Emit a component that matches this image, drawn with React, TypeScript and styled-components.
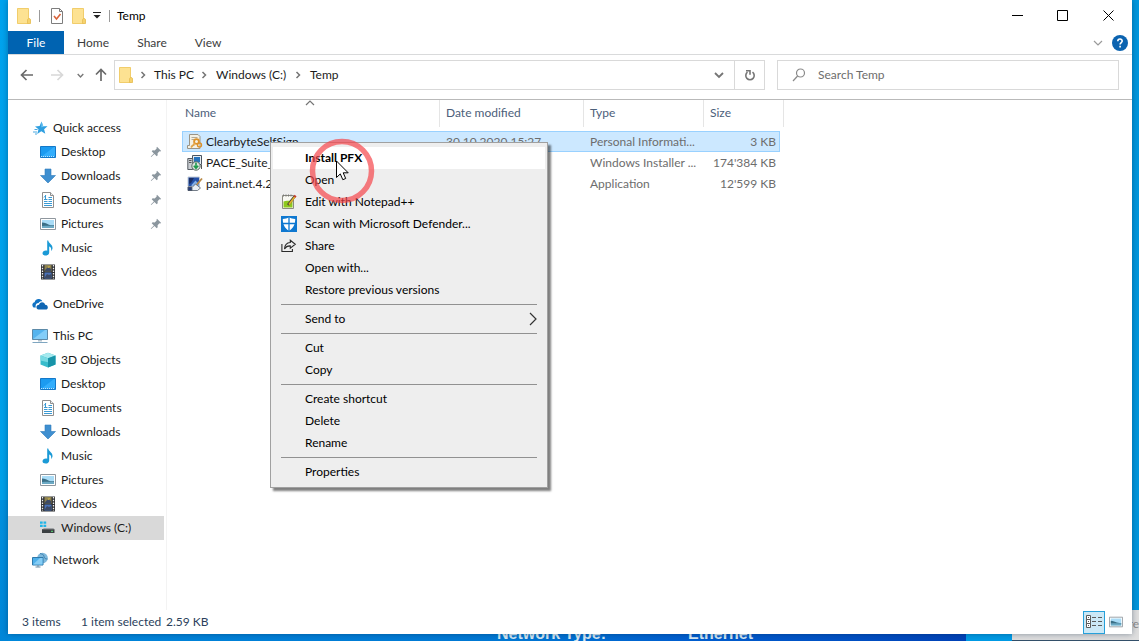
import React from "react";
import styled, { createGlobalStyle, css } from "styled-components";

const Global = createGlobalStyle`
  * { box-sizing: border-box; }
  body { margin: 0; font: 12px/16px Lato, "Open Sans", sans-serif; color: #1b1b1b; }
  button, input { font: inherit; color: inherit; background: none; border: 0; padding: 0; margin: 0; }
  a { color: inherit; text-decoration: none; }
  svg { display: block; flex: none; }
`;

const Desktop = styled.div`
  position: relative;
  display: flex;
  min-height: 100vh;
  padding: 0 7px 7px 8px;
  overflow: hidden;
  background:
    linear-gradient(#00a3ee, #00a0e8 78%, #0090de 78%, #0086d8) left / 8px 100% no-repeat,
    linear-gradient(#0097dd, #0096dc) right / 7px 100% no-repeat,
    linear-gradient(90deg, #0089dc, #0078d4 45%, #005fd0 60%, #0050c4 75%, #0043b8 84%, #0042b8 966px, #009be5 966px);
`;

const Wallpaper = styled.div`
  position: absolute;
  left: 497px;
  bottom: -3px;
  display: flex;
  gap: 82px;
  font: bold 16px/20px "Liberation Sans", sans-serif;
  color: #d8eaf4;
`;

const BackPanel = styled.div`
  position: absolute;
  right: 0;
  bottom: 0;
  width: 127px;
  height: 31px;
  padding-top: 6px;
  border-bottom: 1px solid #34506a;
  background: #dedede;
  color: #8c8c8c;
  text-align: right;
  overflow: hidden;
`;

const Window = styled.main`
  position: relative;
  flex: 1;
  min-width: 0;
  display: flex;
  flex-direction: column;
  background: #fff;
  box-shadow: 0 0 6px rgba(0, 30, 60, 0.4);
`;

const TitleBar = styled.header`
  display: flex;
  align-items: center;
  height: 31px;
  padding: 0 1px 0 9px;
  color: #000;
`;

const Rule = styled.span<{ $space: number }>`
  width: 1px;
  height: 12px;
  margin: 0 ${(p) => p.$space}px;
  background: #9a9a9a;
`;

const IconButton = styled.button<{ $w: number; $h?: number }>`
  display: flex;
  flex: none;
  align-items: center;
  justify-content: center;
  width: ${(p) => p.$w}px;
  height: ${(p) => p.$h ?? 30}px;
`;

const Title = styled.h1`
  flex: 1;
  margin: 0;
  font-size: 12px;
  font-weight: 400;
`;

const Ribbon = styled.nav`
  display: flex;
  align-items: center;
  height: 24px;
  border-bottom: 1px solid #d9dadb;
  color: #3c3c3c;
`;

const Tab = styled.button<{ $active?: boolean; $w: number }>`
  width: ${(p) => p.$w}px;
  height: 23px;
  ${(p) => p.$active && css`background: #0063b1; color: #fff;`}
`;

const Spacer = styled.span`
  flex: 1;
`;

const AddressRow = styled.div`
  display: flex;
  height: 45px;
  padding: 5px 13px 9px 4px;
  border-bottom: 1px solid #b9b9b9;
`;

const AddressBox = styled.div`
  display: flex;
  flex: 1;
  align-items: center;
  min-width: 0;
  padding-left: 4px;
  border: 1px solid #d9d9d9;
  color: #1b1b1b;
`;

const Crumb = styled.button<{ $w: number }>`
  width: ${(p) => p.$w}px;
  text-align: left;
  white-space: nowrap;
`;

const Refresh = styled(IconButton)`
  border-left: 1px solid #d9d9d9;
`;

const SearchBox = styled.label`
  display: flex;
  align-items: center;
  gap: 12px;
  width: 342px;
  margin-left: 12px;
  padding-left: 14px;
  border: 1px solid #d9d9d9;
`;

const SearchInput = styled.input`
  flex: 1;
  min-width: 0;
  outline: none;
  &::placeholder { color: #6d6d6d; opacity: 1; }
`;

const Body = styled.div`
  display: flex;
  flex: 1;
`;

const Sidebar = styled.nav`
  display: flex;
  flex-direction: column;
  gap: 8px;
  width: 159px;
  padding: 16px 2px 16px 0;
  border-right: 1px solid #f3f3f3;
`;

const Group = styled.div`
  display: flex;
  flex-direction: column;
`;

const NavLink = styled.a<{ $root?: boolean; $active?: boolean }>`
  display: flex;
  align-items: center;
  gap: 5px;
  height: 24px;
  padding: 0 2px 0 ${(p) => (p.$root ? 24 : 32)}px;
  background: ${(p) => (p.$active ? "#d9d9d9" : "transparent")};
`;

const NavText = styled.span`
  flex: 1;
  white-space: nowrap;
`;

const FilePane = styled.section`
  position: relative;
  flex: 1;
  padding-left: 15px;
`;

const Files = styled.table`
  width: 602px;
  table-layout: fixed;
  border-collapse: separate;
  border-spacing: 0;
  white-space: nowrap;
`;

const HeadCell = styled.th`
  position: relative;
  padding: 0 0 4px;
  font-weight: 400;
  text-align: left;
  color: #4c607a;
`;

const HeadLabel = styled.div<{ $first?: boolean }>`
  height: 27px;
  padding: 5px 0 0 ${(p) => (p.$first ? 3 : 6)}px;
  border-right: 1px solid #e5e5e5;
`;

const SortMark = styled.span`
  position: absolute;
  top: 0;
  left: 50%;
  margin-left: -6px;
`;

const Cell = styled.td<{ $right?: boolean }>`
  height: 21px;
  padding: 0 4px 0 6px;
  overflow: hidden;
  text-align: ${(p) => (p.$right ? "right" : "left")};
  color: #6d6d6d;
  border: 1px solid transparent;
  border-width: 1px 0;
`;

const NameCell = styled(Cell)`
  padding-left: 5px;
`;

const FileRow = styled.tr<{ $selected?: boolean }>`
  ${(p) =>
    p.$selected &&
    css`
      ${Cell} { background: #cce8ff; border-color: #99d1ff; }
      ${Cell}:first-child { border-left-width: 1px; padding-left: 4px; }
      ${Cell}:last-child { border-right-width: 1px; padding-right: 3px; }
    `}
`;

const FileName = styled.div`
  display: flex;
  align-items: center;
  gap: 3px;
  color: #1b1b1b;
`;

const Menu = styled.div`
  position: absolute;
  top: 42px;
  left: 103px;
  width: 278px;
  padding: 4px 2px;
  border: 1px solid #a0a0a0;
  background: #eee;
  box-shadow: 3px 3px 2px rgba(0, 0, 0, 0.5);
  color: #000;
`;

const MenuItem = styled.button<{ $hot?: boolean }>`
  display: flex;
  align-items: center;
  gap: 8px;
  width: 100%;
  height: 22px;
  padding: 0 6px 0 8px;
  text-align: left;
  ${(p) => p.$hot && css`background: #fff; font-weight: 700;`}
`;

const MenuIcon = styled.span`
  width: 16px;
  height: 16px;
`;

const MenuRule = styled.hr`
  height: 1px;
  margin: 3px 8px;
  border: 0;
  background: #919191;
`;

const ClickRing = styled.svg`
  position: absolute;
  top: 38px;
  left: 142px;
  pointer-events: none;
`;

const StatusBar = styled.footer`
  display: flex;
  align-items: center;
  height: 24px;
  padding: 0 5px 0 14px;
  color: #2b3f5c;
`;

const Status = styled.span<{ $w: number }>`
  width: ${(p) => p.$w}px;
  white-space: nowrap;
`;

const ViewButton = styled(IconButton)<{ $on?: boolean }>`
  ${(p) => p.$on && css`background: #cbe8f6; border: 1px solid #26a0da;`}
`;

const Folder = () => (
  <svg width="14" height="16" viewBox="0 0 14 16">
    <path d="M0.5 0.5h11v10.5l2 .5v4h-13z" fill="#ffe08a" />
    <path d="M0.5 0.5h11v15h-11z" fill="#fde292" stroke="#f1cd6b" />
    <path d="M10.500 15.500v-4c.2-1.200 2.800-1.200 3 0v4z" fill="#f7d36e" stroke="#e6bd54" strokeWidth=".8" />
  </svg>
);

const Chevron = ({ d, size = 10, color = "#757575", w = 1.5 }: { d: string; size?: number; color?: string; w?: number }) => (
  <svg width={size} height={size} viewBox="0 0 10 10" fill="none" stroke={color} strokeWidth={w}>
    <path d={d} />
  </svg>
);
const RIGHT = "M2.500 2 5.500 5 2.500 8";
const DOWN = "M1 3 5 7 9 3";

const Arrow = ({ turn, color }: { turn: number; color: string }) => (
  <svg width="14" height="14" viewBox="0 0 14 14" fill="none" stroke={color} strokeWidth="1.700">
    <g transform={`rotate(${turn} 7 7)`}>
      <path d="M13 7H1.500M6.500 2 1.500 7l5 5" />
    </g>
  </svg>
);

const Pin = () => (
  <svg width="12" height="12" viewBox="0 0 12 12" fill="#8b969e">
    <path d="M7 .8 11.200 5l-1.100.5-.7-.2-1.800 2 .1 2-1 .9L4.500 8 1.200 11l-.4-.4L3.900 7.400 1.700 5.200l1-.9 2 .1 2-1.800-.2-.8z" />
  </svg>
);

const icons: Record<string, React.ReactNode> = {
  star: (
    <>
      <path d="M9.500 1.500 11.200 6l4.300.3-3.400 2.900 1.200 4.600L9.300 11.200 5.200 14l1.300-4.700L3 6.400l4.600-.3z" fill="#2f9fe0" />
      <path d="M9.500 1.500 11.200 6l4.300.3-6.200 1z" fill="#6fc4f2" />
      <path d="M2.500 9.500h3M1 12h4M3 14h2" stroke="#4aa9e2" />
    </>
  ),
  desktop: (
    <>
      <path d="M.5 2.500h15v11H.5z" fill="#1c9bf0" stroke="#1478c8" />
      <path d="M1 13 14 3h1v9z" fill="#33aefc" />
      <path d="M1 12.500h14" stroke="#bfe3fa" strokeDasharray="1 1" />
    </>
  ),
  down: <path d="M5 1h6v6.500h4.500L8 15 .5 7.500H5z" fill="#3f8fd0" stroke="#2f7cbc" strokeWidth=".6" />,
  doc: (
    <>
      <path d="M2.500.5h8l3 3v12h-11z" fill="#fff" stroke="#8f8f8f" />
      <path d="M10.500.5v3h3" fill="#eee" stroke="#8f8f8f" />
      <path d="M8.500 5.500H12M8.500 7.500H12M4 9.500h3.500M8.500 9.500H12M4 11.500h8M4 13.500h8" stroke="#3a9ad4" />
      <path d="M4 7.500h3.500M5.500 3v4.500M4 5.500l2-2.500" fill="none" stroke="#3a9ad4" />
    </>
  ),
  picture: (
    <>
      <path d="M.5 2.500h15v11H.5z" fill="#fff" stroke="#8f979e" />
      <path d="M2 4h12v8H2z" fill="#a9dcf7" />
      <path d="M2 6.500c3 0 5 1.500 7 2.200 2 .6 3.500.6 5 .3v1H2z" fill="#3a6f87" />
      <path d="M2 10c4-.3 8 0 12-.3V12H2z" fill="#6ba9c4" />
    </>
  ),
  music: (
    <path d="M8.200.5c.5 3 4.800 4 4.300 8-.2 1.200-.8 2-1.500 2.600.8-2.700-.3-4.100-1.800-4.700v6c0 1.900-1.600 3.100-3.500 3.100-1.800 0-3.200-.8-3.200-2.200 0-1.900 2.400-3.300 4.700-2.500V.5z" fill="#1b9ad6" />
  ),
  video: (
    <>
      <path d="M1 .5h14v15H1z" fill="#2f3033" />
      <path d="M4.500 1h7v6.500h-7z" fill="#8d8250" />
      <path d="M4.500 8.500h7v6h-7z" fill="#4b72b8" />
      <path d="M5 6 8 3l3 2v2.500H5zM5 13l2-3 2 1 2-1v4H5z" fill="#3d4a66" />
      <path d="m5 2 2 1 3-1-1 2z" fill="#d6b94b" />
      <path d="M2.500 1v14M13.500 1v14" stroke="#f0f0f0" strokeWidth="1.300" strokeDasharray="1.500 1.200" />
    </>
  ),
  cloud: (
    <>
      <path d="M1.500 11.500C-.6 9.300.4 6.700 2.600 6.300 3.200 3.600 5.400 2.700 7 3c1.600.1 2.700 1 3.300 2.200-1.700-.3-3 .4-3.700 1.700-2.300 0-3.500 1.900-2.800 4.600z" fill="#1173c4" />
      <path d="M6.500 13.500c-2.800-.2-2.900-4.500.6-4.700.4-3 5-3.600 6 0 3.300.1 3.700 4.500.6 4.700z" fill="#0f66b3" />
    </>
  ),
  pc: (
    <>
      <path d="M.5 1.500h15v10H.5z" fill="#55b4ee" stroke="#5d8aa8" />
      <path d="M1 11 13 2h2v9z" fill="#83cdf8" />
      <path d="M6 12h4v1.500H6z" fill="#b5c4cf" />
      <path d="M.5 14.500h15" stroke="#7fa6c0" />
    </>
  ),
  cube: (
    <>
      <path d="M8 .8 15.500 3.500v9L8 15.500.5 12.500v-9z" fill="#38bccb" />
      <path d="M8 .8 15.500 3.500 8 6.200.5 3.500z" fill="#a5e9ee" />
      <path d="M8 6.200 15.500 3.500v9L8 15.500z" fill="#1793a8" />
      <path d="M.5 3.500 8 6.200v4L.5 8.500z" fill="#77d9e2" />
    </>
  ),
  drive: (
    <>
      <path d="M0 1.500h2.700v2.300H0zM3.500 1.500h2.700v2.300H3.500zM0 4.700h2.700V7H0zM3.500 4.700h2.700V7H3.500z" fill="#1fb5e8" />
      <path d="m3 9 .8-.8h9.500L14.200 9z" fill="#8d9094" />
      <path d="M2 9.200h12.500V13H2z" fill="#3b3f42" />
      <path d="M11 11.300h2" stroke="#5fe07a" />
    </>
  ),
  network: (
    <>
      <circle cx="10.500" cy="6" r="5.300" fill="#7fb9dc" />
      <path d="M8 1.500c2 .5 4 1 4 3s2 2.500 3.500 2.500" stroke="#3c7fae" fill="none" />
      <path d="M.5 5.500h10.500v7.500H.5z" fill="#4fb0ea" stroke="#2f79aa" />
      <path d="m1 12.500 7-6.500h2.500v6.500z" fill="#86cdf5" />
      <path d="M3.500 15h5M6 13v2" stroke="#6b8ca3" />
    </>
  ),
  cert: (
    <>
      <path d="M2.500.5h8.500l2 2v12H.5v-3h2z" fill="#f4f1e4" stroke="#9a9486" />
      <path d="M4.500 3.500h6M4.500 5.500h3M4.500 11.500h3" stroke="#b3ab98" />
      <circle cx="9.500" cy="7.500" r="2.400" fill="none" stroke="#dd922a" strokeWidth="1.800" />
      <circle cx="12.500" cy="11" r="2" fill="none" stroke="#dd922a" strokeWidth="1.400" />
      <path d="m8 9-4 4.500" stroke="#e5a545" strokeWidth="1.800" />
    </>
  ),
  msi: (
    <>
      <path d="M5.500.5h9v9h-9z" fill="#e7edf3" stroke="#4a5561" />
      <path d="M7 2h6v5.500H7z" fill="#2673bd" />
      <path d="M.8 3.500h5v11h-5z" fill="#c9cdd2" stroke="#565c63" />
      <path d="M2 5.500h2.500M2 7.500h2.500" stroke="#555" />
      <circle cx="9" cy="11" r="4.200" fill="#dce3df" stroke="#5c6d66" />
      <path d="M9 7.800v4.500M6.800 10.800 9 13.200l2.200-2.400" stroke="#1d9a4b" strokeWidth="1.600" fill="none" />
      <path d="M14.500 10v4" stroke="#555" />
    </>
  ),
  paint: (
    <>
      <path d="M1 1h11.500v9.500H1z" fill="#2350a8" stroke="#c5ccd6" />
      <path d="M2 2h5L4 7 2 8z" fill="#1b2f66" />
      <path d="m4.500 9 4-4.500 3.500 4v1.500H4.500z" fill="#7faee8" />
      <path d="M15 2.500 9.500 9" stroke="#b98a48" strokeWidth="1.800" />
      <path d="M1 11h4v3.500H1z" fill="#273c7a" stroke="#4a5568" />
      <path d="M5 11.500 8.500 8l5 4-3 2.500H5z" fill="#e8eef4" stroke="#54606c" strokeWidth=".8" />
    </>
  ),
  notepad: (
    <>
      <path d="M1.500 1.500h11v13h-11z" fill="#f8f8f2" stroke="#8b8b80" />
      <path d="M2.500 2.500V.5M5 2.500V.5M7.500 2.500V.5M10 2.500V.5" stroke="#777" />
      <path d="M2.500 7.500c3-1.500 6 0 9-1v7h-9z" fill="#8dc81e" />
      <path d="m7 11 6.500-8.500" stroke="#4f4a35" strokeWidth="2.600" />
      <path d="m8 10.500 6-8" stroke="#e6b32c" strokeWidth="1.500" />
      <path d="m13 1.500 2 1.500" stroke="#c33a2c" strokeWidth="1.800" />
    </>
  ),
  shield: (
    <>
      <path d="M0 0h16v16H0z" fill="#0f78d0" />
      <path d="M8 1.200c1.900 1.200 3.800 1.700 6.200 1.700 0 5.400-1.600 9-6.200 11.800C3.400 11.900 1.800 8.300 1.800 2.900 4.200 2.900 6.100 2.400 8 1.200z" fill="#fff" />
      <path d="M8 1v14M1 7.500h14" stroke="#0f78d0" strokeWidth="1.300" />
    </>
  ),
  share: (
    <path d="M.9 6v7.500h10.500V11M9.300 2.200l5 4-5 4V7.900C6.500 7.700 4.800 8.800 3.500 11 3.700 7 5.800 4.700 9.300 4.500z" fill="none" stroke="#2b2b2b" strokeWidth="1.100" />
  ),
};

const Icon = ({ name, size = 16 }: { name: string; size?: number }) => (
  <svg width={size} height={size} viewBox="0 0 16 16">{icons[name]}</svg>
);

type Entry = { icon: string; label: string; root?: boolean; pin?: boolean; active?: boolean };
const groups: Entry[][] = [
  [
    { icon: "star", label: "Quick access", root: true },
    { icon: "desktop", label: "Desktop", pin: true },
    { icon: "down", label: "Downloads", pin: true },
    { icon: "doc", label: "Documents", pin: true },
    { icon: "picture", label: "Pictures", pin: true },
    { icon: "music", label: "Music" },
    { icon: "video", label: "Videos" },
  ],
  [{ icon: "cloud", label: "OneDrive", root: true }],
  [
    { icon: "pc", label: "This PC", root: true },
    { icon: "cube", label: "3D Objects" },
    { icon: "desktop", label: "Desktop" },
    { icon: "doc", label: "Documents" },
    { icon: "down", label: "Downloads" },
    { icon: "music", label: "Music" },
    { icon: "picture", label: "Pictures" },
    { icon: "video", label: "Videos" },
    { icon: "drive", label: "Windows (C:)", active: true },
  ],
  [{ icon: "network", label: "Network", root: true }],
];

const files = [
  { icon: "cert", name: "ClearbyteSelfSign", date: "30.10.2020 15:27", type: "Personal Informati...", size: "3 KB", selected: true },
  { icon: "msi", name: "PACE_Suite_", date: "", type: "Windows Installer ...", size: "174'384 KB" },
  { icon: "paint", name: "paint.net.4.2", date: "", type: "Application", size: "12'599 KB" },
];

type Command = { label: string; icon?: string; hot?: boolean; sub?: boolean };
const commands: Command[][] = [
  [
    { label: "Install PFX", hot: true },
    { label: "Open" },
    { label: "Edit with Notepad++", icon: "notepad" },
    { label: "Scan with Microsoft Defender...", icon: "shield" },
    { label: "Share", icon: "share" },
    { label: "Open with..." },
    { label: "Restore previous versions" },
  ],
  [{ label: "Send to", sub: true }],
  [{ label: "Cut" }, { label: "Copy" }],
  [{ label: "Create shortcut" }, { label: "Delete" }, { label: "Rename" }],
  [{ label: "Properties" }],
];

export default function App() {
  return (
    <Desktop>
      <Global />
      <Wallpaper><span>Network Type:</span><span>Ethernet</span></Wallpaper>
      <BackPanel>re</BackPanel>
      <Window>
        <TitleBar>
          <Folder />
          <Rule $space={8} />
          <IconButton $w={18} aria-label="Properties">
            <svg width="12" height="16" viewBox="0 0 12 16" fill="none">
              <path d="M.5.500h8l3 3v12H.5z" fill="#fff" stroke="#7d7d7d" />
              <path d="M8.500.5v3h3" stroke="#7d7d7d" />
              <path d="m3 8 2.500 3 4-5" stroke="#d9633a" strokeWidth="1.600" />
            </svg>
          </IconButton>
          <IconButton $w={26} aria-label="New folder"><Folder /></IconButton>
          <IconButton $w={10} aria-label="Customize toolbar">
            <svg width="8" height="7" viewBox="0 0 8 7"><path d="M0 .5h8" stroke="#222" /><path d="M.5 3h7L4 6.500z" fill="#222" /></svg>
          </IconButton>
          <Rule $space={7} />
          <Title>Temp</Title>
          <IconButton $w={46} aria-label="Minimize">
            <svg width="11" height="11" viewBox="0 0 11 11" stroke="#000"><path d="M0 5.500h11" /></svg>
          </IconButton>
          <IconButton $w={45} aria-label="Maximize">
            <svg width="11" height="11" viewBox="0 0 11 11" stroke="#000" fill="none"><path d="M.5.500h10v10H.5z" /></svg>
          </IconButton>
          <IconButton $w={46} aria-label="Close">
            <svg width="11" height="11" viewBox="0 0 11 11" stroke="#000"><path d="m.5.500 10 10M10.500.500l-10 10" /></svg>
          </IconButton>
        </TitleBar>
        <Ribbon>
          <Tab $w={56} $active>File</Tab>
          <Tab $w={58}>Home</Tab>
          <Tab $w={60}>Share</Tab>
          <Tab $w={52}>View</Tab>
          <Spacer />
          <IconButton $w={20} $h={23} aria-label="Expand ribbon"><Chevron d={DOWN} color="#9a9a9a" w={1.2} /></IconButton>
          <IconButton $w={24} $h={23} aria-label="Help">
            <svg width="16" height="16" viewBox="0 0 16 16" fill="none">
              <circle cx="8" cy="8" r="8" fill="#0b63b0" />
              <path d="M5.800 6.300c0-3 4.500-2.900 4.400-.2 0 1.500-2.100 1.600-2.100 3.500M8.100 10.700v1.800" stroke="#fff" strokeWidth="1.600" />
            </svg>
          </IconButton>
        </Ribbon>
        <AddressRow>
          <IconButton $w={30} aria-label="Back"><Arrow turn={0} color="#6a6a6a" /></IconButton>
          <IconButton $w={30} aria-label="Forward"><Arrow turn={180} color="#d8d8d8" /></IconButton>
          <IconButton $w={16} aria-label="Recent locations"><Chevron d={DOWN} size={7} color="#777" w={2} /></IconButton>
          <IconButton $w={26} aria-label="Up"><Arrow turn={90} color="#6a6a6a" /></IconButton>
          <AddressBox>
            <Folder />
            <IconButton $w={21} aria-label="Root"><Chevron d={RIGHT} /></IconButton>
            <Crumb $w={40}>This PC</Crumb>
            <IconButton $w={22} aria-label="This PC folders"><Chevron d={RIGHT} /></IconButton>
            <Crumb $w={72}>Windows (C:)</Crumb>
            <IconButton $w={22} aria-label="Windows (C:) folders"><Chevron d={RIGHT} /></IconButton>
            <Crumb $w={40}>Temp</Crumb>
            <Spacer />
            <IconButton $w={30} $h={28} aria-label="Previous locations"><Chevron d={DOWN} color="#757575" w={1.8} /></IconButton>
            <Refresh $w={30} $h={28} aria-label="Refresh">
              <svg width="12" height="12" viewBox="0 0 12 12" fill="none" stroke="#757575" strokeWidth="1.600">
                <path d="M8.500 3.200a4.200 4.200 0 1 1-5 0M2 1.800h4v4" />
              </svg>
            </Refresh>
          </AddressBox>
          <SearchBox>
            <svg width="14" height="14" viewBox="0 0 14 14" fill="none" stroke="#8a8a8a" strokeWidth="1.200">
              <circle cx="8.500" cy="5" r="4" /><path d="M5.600 8 1 13" />
            </svg>
            <SearchInput type="search" placeholder="Search Temp" aria-label="Search Temp" />
          </SearchBox>
        </AddressRow>
        <Body>
          <Sidebar>
            {groups.map((g, i) => (
              <Group key={i}>
                {g.map((e) => (
                  <NavLink key={e.label} href="#" $root={e.root} $active={e.active}>
                    <Icon name={e.icon} />
                    <NavText>{e.label}</NavText>
                    {e.pin && <Pin />}
                  </NavLink>
                ))}
              </Group>
            ))}
          </Sidebar>
          <FilePane>
            <Files>
              <colgroup>
                <col style={{ width: 258 }} /><col style={{ width: 144 }} /><col style={{ width: 120 }} /><col style={{ width: 76 }} /><col />
              </colgroup>
              <thead>
                <tr>
                  <HeadCell>
                    <HeadLabel $first>Name</HeadLabel>
                    <SortMark><Chevron d="M1 5 5 1 9 5" w={1.2} /></SortMark>
                  </HeadCell>
                  <HeadCell><HeadLabel>Date modified</HeadLabel></HeadCell>
                  <HeadCell><HeadLabel>Type</HeadLabel></HeadCell>
                  <HeadCell colSpan={2}><HeadLabel>Size</HeadLabel></HeadCell>
                </tr>
              </thead>
              <tbody>
                {files.map((f) => (
                  <FileRow key={f.name} $selected={f.selected}>
                    <NameCell><FileName><Icon name={f.icon} />{f.name}</FileName></NameCell>
                    <Cell>{f.date}</Cell>
                    <Cell>{f.type}</Cell>
                    <Cell $right>{f.size}</Cell>
                  </FileRow>
                ))}
              </tbody>
            </Files>
            <Menu role="menu">
              {commands.map((section, i) => (
                <React.Fragment key={i}>
                  {i > 0 && <MenuRule />}
                  {section.map((c) => (
                    <MenuItem key={c.label} role="menuitem" $hot={c.hot}>
                      <MenuIcon>{c.icon && <Icon name={c.icon} />}</MenuIcon>
                      {c.label}
                      {c.sub && (
                        <>
                          <Spacer />
                          <svg width="12" height="14" viewBox="0 0 12 14" fill="none" stroke="#333" strokeWidth="1.200">
                            <path d="m3 1 6 6-6 6" />
                          </svg>
                        </>
                      )}
                    </MenuItem>
                  ))}
                </React.Fragment>
              ))}
            </Menu>
            <ClickRing width="66" height="66" viewBox="0 0 66 66">
              <circle cx="33" cy="33" r="29.500" fill="none" stroke="#f5464b" strokeOpacity=".7" strokeWidth="5.500" />
              <path d="M27.500 23v16.500l3.800-3.600 2.500 5.800 2.900-1.200-2.500-5.700h5z" fill="#fff" stroke="#000" />
            </ClickRing>
          </FilePane>
        </Body>
        <StatusBar>
          <Status $w={59}>3 items</Status>
          <Status $w={85}>1 item selected</Status>
          <Status $w={60}>2.59 KB</Status>
          <Spacer />
          <ViewButton $w={22} $h={23} $on aria-label="Details view">
            <svg width="16" height="14" viewBox="0 0 16 14" fill="none" stroke="#5b5b5b">
              <path d="M.5.500h4v4h-4zM.5 4.500h4v4h-4zM.5 8.500h4v4h-4z" fill="#fff" />
              <path d="M6 2.500h4M12 2.500h4M6 6.500h4M12 6.500h4M6 10.500h4M12 10.500h4" />
              <path d="M2 2.500h1M2 6.500h1M2 10.500h1" />
            </svg>
          </ViewButton>
          <ViewButton $w={22} $h={23} aria-label="Thumbnail view"><Icon name="picture" size={14} /></ViewButton>
        </StatusBar>
      </Window>
    </Desktop>
  );
}
